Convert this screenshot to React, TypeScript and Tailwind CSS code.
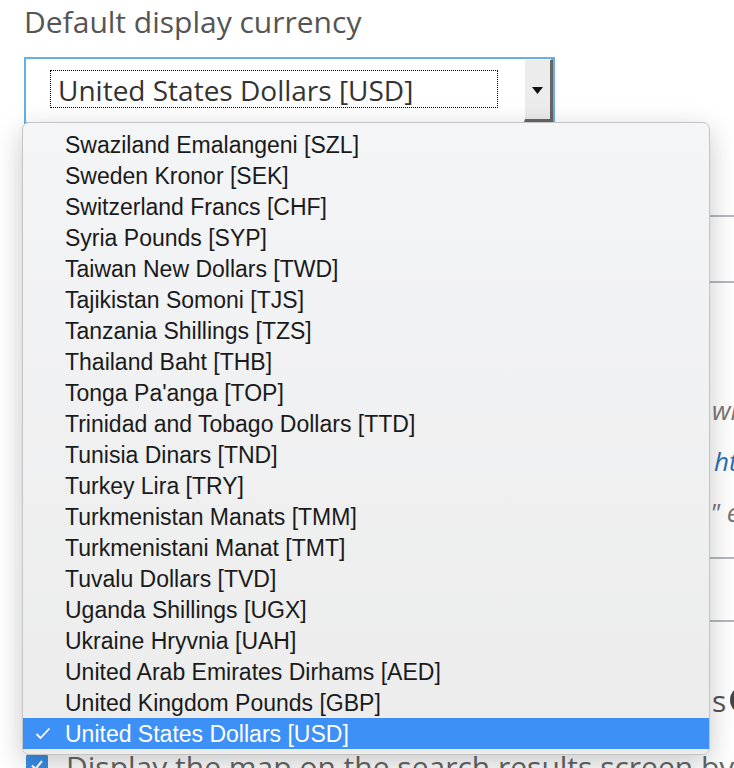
import React from "react";

const currencies = [
  "Swaziland Emalangeni [SZL]",
  "Sweden Kronor [SEK]",
  "Switzerland Francs [CHF]",
  "Syria Pounds [SYP]",
  "Taiwan New Dollars [TWD]",
  "Tajikistan Somoni [TJS]",
  "Tanzania Shillings [TZS]",
  "Thailand Baht [THB]",
  "Tonga Pa'anga [TOP]",
  "Trinidad and Tobago Dollars [TTD]",
  "Tunisia Dinars [TND]",
  "Turkey Lira [TRY]",
  "Turkmenistan Manats [TMM]",
  "Turkmenistani Manat [TMT]",
  "Tuvalu Dollars [TVD]",
  "Uganda Shillings [UGX]",
  "Ukraine Hryvnia [UAH]",
  "United Arab Emirates Dirhams [AED]",
  "United Kingdom Pounds [GBP]",
  "United States Dollars [USD]",
];

export default function App() {
  return (
    <div className="relative h-[768px] w-full overflow-hidden bg-white font-['Open_Sans',sans-serif]">
      <div className="pl-6">
        <label className="block pt-[2px] text-[30px] leading-[40px] text-[#555]">
          Default display currency
        </label>
        <div className="mt-[15px] flex h-[67px] w-[531px] items-start border-2 border-[#66afe9] bg-white">
          <div className="ml-[24px] mt-[11px] flex h-[38px] w-[448px] items-center border border-dotted border-black pl-[7px] pt-[2px] text-[28px] leading-none text-[#333]">
            United States Dollars [USD]
          </div>
          <div className="ml-auto flex h-full w-[29px] items-start justify-center border-b-[3px] border-r-[3px] border-t border-l border-b-[#666] border-r-[#666] border-t-white border-l-white bg-[#ececec] pt-[27px]">
            <svg width="11" height="7" viewBox="0 0 11 7">
              <path d="M0 0 H11 L5.5 7 Z" fill="#111" />
            </svg>
          </div>
        </div>

        <div className="mt-[91px] h-[2px] bg-[#b4b8bc]" />
        <div className="mt-[64px] h-[2px] bg-[#b4b8bc]" />
        <p className="ml-[688px] mt-[111px] whitespace-nowrap text-[26px] italic leading-[32px] text-[#777]">
          wi
        </p>
        <p className="ml-[690px] mt-[19px] whitespace-nowrap text-[26px] italic leading-[32px] text-[#2a6db5]">
          ht
        </p>
        <p className="ml-[686px] mt-[19px] whitespace-nowrap text-[26px] italic leading-[32px] text-[#777]">
          " e
        </p>
        <div className="mt-[29px] h-[2px] bg-[#b4b8bc]" />
        <div className="mt-[61px] h-[2px] bg-[#b4b8bc]" />
        <div className="ml-[688px] mt-[58px] flex h-[40px] items-center gap-[4px] whitespace-nowrap text-[30px] text-[#555]">
          <span>s</span>
          <span className="inline-block h-[28px] w-[28px] shrink-0 rounded-full bg-[#444]" />
        </div>
        <div className="mt-[30px] flex items-start gap-[18px] whitespace-nowrap">
          <span className="ml-[2px] mt-[4px] flex h-[22px] w-[22px] shrink-0 items-center justify-center rounded-[3px] bg-[#3a8ee6]">
            <svg width="16" height="16" viewBox="0 0 16 16">
              <path d="M3 8.5 L6.5 12 L13 4" stroke="white" strokeWidth="2.2" fill="none" />
            </svg>
          </span>
          <span className="text-[30px] leading-[34px] text-[#666]">
            Display the map on the search results screen by
          </span>
        </div>
      </div>

      <div className="absolute left-[22px] top-[122px] w-[688px] rounded-[7px] border border-[#c4c4c4] bg-gradient-to-b from-[#f4f5f7] to-[#ececec] pb-[5px] pt-[6px] shadow-[0_8px_28px_rgba(0,0,0,0.22)] font-['Liberation_Sans',Arial,sans-serif]">
        {currencies.map((c, i) => {
          const selected = i === currencies.length - 1;
          return (
            <div
              key={c}
              className={
                selected
                  ? "relative flex h-[31px] items-center bg-[#3d90f5] pl-[42px] pt-[1px] text-[23px] text-white"
                  : "relative flex h-[31px] items-center pl-[42px] pt-[1px] text-[23px] text-[#1a1a1a]"
              }
            >
              {selected && (
                <svg
                  className="absolute left-[12px] top-[9px]"
                  width="16"
                  height="13"
                  viewBox="0 0 16 13"
                >
                  <path d="M1.5 7 L5.5 11 L14.5 1.5" stroke="white" strokeWidth="1.8" fill="none" />
                </svg>
              )}
              {c}
            </div>
          );
        })}
      </div>
    </div>
  );
}
